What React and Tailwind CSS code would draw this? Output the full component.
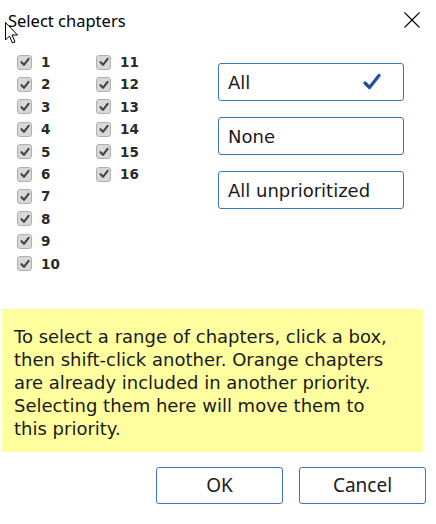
import React from "react";

function Check() {
  return (
    <span className="flex h-[15px] w-[15px] items-center justify-center rounded-[3px] border border-[#b0b0b0] bg-[#d8d8d8]">
      <svg width="10" height="10" viewBox="0 0 10 10">
        <path d="M1.5 5.2 L4 7.8 L8.6 1.8" fill="none" stroke="#444" strokeWidth="2.1" strokeLinecap="round" strokeLinejoin="round" />
      </svg>
    </span>
  );
}

function Item({ n }) {
  return (
    <div className="flex h-[22.4px] items-center gap-[9px]">
      <Check />
      <span className="text-[13.5px] font-bold text-[#2a2a2a]" style={{ fontFamily: "'DejaVu Sans', Verdana, sans-serif" }}>{n}</span>
    </div>
  );
}

export default function App() {
  const col1 = [1, 2, 3, 4, 5, 6, 7, 8, 9, 10];
  const col2 = [11, 12, 13, 14, 15, 16];
  return (
    <div className="relative h-[524px] w-[436px] overflow-hidden bg-white">
      <div className="flex h-[42px] items-start justify-between pl-[8px] pr-[16px] pt-[8px]">
        <div className="mt-[2px] text-[16.5px] leading-[22px] text-black" style={{ fontFamily: "'Noto Sans', 'Open Sans', sans-serif" }}>Select chapters</div>
        <svg width="16" height="16" viewBox="0 0 16 16" className="mt-[4px]">
          <path d="M0.5 0.5 L15.5 15.5 M15.5 0.5 L0.5 15.5" stroke="#000" strokeWidth="1.1" />
        </svg>
      </div>
      <div className="flex pl-[17px]">
        <div className="flex w-[79px] flex-col pt-[9px]">
          {col1.map((n) => <Item key={n} n={n} />)}
        </div>
        <div className="flex w-[122px] flex-col pt-[9px]">
          {col2.map((n) => <Item key={n} n={n} />)}
        </div>
        <div className="flex w-[186px] flex-col gap-[16px] pt-[21px]" style={{ fontFamily: "'DejaVu Sans', Verdana, sans-serif" }}>
          <div className="flex h-[38px] items-center justify-between rounded-[3px] border-[1.5px] border-[#3b73c8] pl-[9px] pr-[22px] text-[18px] text-[#1a1a1a]">
            <span>All</span>
            <svg width="18" height="18" viewBox="0 0 18 18">
              <path d="M2 10 L6.5 14.5 L16 2.5" fill="none" stroke="#1f4f9e" strokeWidth="3.2" strokeLinecap="round" strokeLinejoin="round" />
            </svg>
          </div>
          <div className="flex h-[38px] items-center rounded-[3px] border-[1.5px] border-[#3b73c8] pl-[9px] text-[18px] text-[#1a1a1a]">None</div>
          <div className="flex h-[38px] items-center rounded-[3px] border-[1.5px] border-[#3b73c8] pl-[9px] text-[18px] text-[#1a1a1a]">All unprioritized</div>
        </div>
      </div>
      <div className="ml-[2px] mr-[13px] mt-[34px] h-[143px] bg-[#ffffa0] pl-[12px] pr-[24px] pt-[16px] text-[18px] leading-[23px] text-[#1a1a1a]" style={{ fontFamily: "'DejaVu Sans', Verdana, sans-serif" }}>
        To select a range of chapters, click a box, then shift-click another. Orange chapters are already included in another priority. Selecting them here will move them to this priority.
      </div>
      <div className="mt-[15px] flex justify-end gap-[16px] pr-[10px]" style={{ fontFamily: "'Noto Sans', 'Open Sans', sans-serif" }}>
        <button className="h-[37px] w-[127px] rounded-[3px] border-[1.5px] border-[#3b73c8] bg-white text-[19px] text-[#1a1a1a]">OK</button>
        <button className="h-[37px] w-[127px] rounded-[3px] border-[1.5px] border-[#3b73c8] bg-white text-[19px] text-[#1a1a1a]">Cancel</button>
      </div>
      <svg className="absolute left-[5px] top-[22px]" width="14" height="24" viewBox="0 0 14 24">
        <path d="M0.5 0.5 L0.5 18 L4.5 14 L7.5 21 L10 20 L7 13 L12.5 13 Z" fill="#fff" stroke="#000" strokeWidth="1" strokeLinejoin="miter" />
      </svg>
    </div>
  );
}
